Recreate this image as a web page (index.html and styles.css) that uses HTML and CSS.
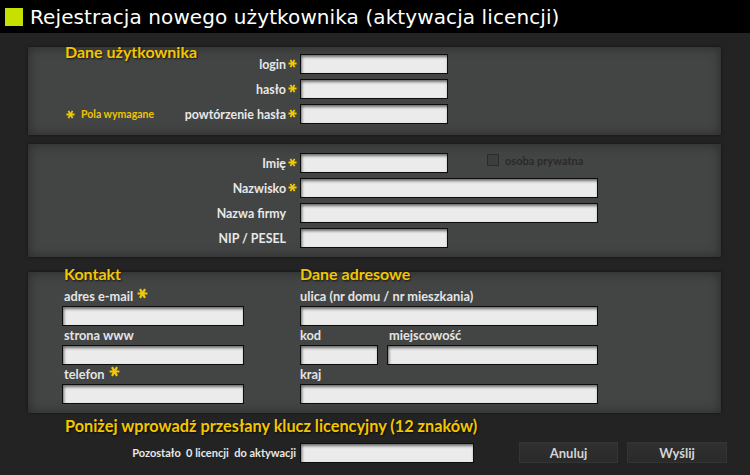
FILE: index.html
```html
<!DOCTYPE html>
<html lang="pl">
<head>
<meta charset="utf-8">
<title>Rejestracja nowego użytkownika</title>
<link rel="stylesheet" href="styles.css">
</head>
<body>
<header class="titlebar">
  <span class="logo"></span>
  <h1 class="title">Rejestracja nowego użytkownika (aktywacja licencji)</h1>
</header>
<main class="content">
  <section class="panel panel-user">
    <div class="side">
      <h2 class="heading">Dane użytkownika</h2>
      <p class="note"><svg class="star" viewBox="0 0 10 10" aria-label="*"><path d="M0.5 5H9.5M2.7 1L7.3 9M7.3 1L2.7 9"/></svg> Pola wymagane</p>
    </div>
    <div class="grid grid-user">
      <label class="lbl">login<svg class="star" viewBox="0 0 10 10" aria-label="*"><path d="M0.5 5H9.5M2.7 1L7.3 9M7.3 1L2.7 9"/></svg></label>
      <input class="field w148" type="text">
      <label class="lbl">hasło<svg class="star" viewBox="0 0 10 10" aria-label="*"><path d="M0.5 5H9.5M2.7 1L7.3 9M7.3 1L2.7 9"/></svg></label>
      <input class="field w148" type="password">
      <label class="lbl">powtórzenie hasła<svg class="star" viewBox="0 0 10 10" aria-label="*"><path d="M0.5 5H9.5M2.7 1L7.3 9M7.3 1L2.7 9"/></svg></label>
      <input class="field w148" type="password">
    </div>
  </section>

  <section class="panel panel-person">
    <div class="grid grid-person">
      <label class="lbl">Imię<svg class="star" viewBox="0 0 10 10" aria-label="*"><path d="M0.5 5H9.5M2.7 1L7.3 9M7.3 1L2.7 9"/></svg></label>
      <div class="cellrow">
        <input class="field w148" type="text">
        <label class="check"><span class="box"></span>osoba prywatna</label>
      </div>
      <label class="lbl">Nazwisko<svg class="star" viewBox="0 0 10 10" aria-label="*"><path d="M0.5 5H9.5M2.7 1L7.3 9M7.3 1L2.7 9"/></svg></label>
      <input class="field w298" type="text">
      <label class="lbl">Nazwa firmy<span class="star blank"></span></label>
      <input class="field w298" type="text">
      <label class="lbl">NIP / PESEL<span class="star blank"></span></label>
      <input class="field w148" type="text">
    </div>
  </section>

  <section class="panel panel-contact">
    <div class="col col-left">
      <h2 class="heading col-heading">Kontakt</h2>
      <div class="fld">
        <label class="flbl">adres e-mail <svg class="star" viewBox="0 0 10 10" aria-label="*"><path d="M0.5 5H9.5M2.7 1L7.3 9M7.3 1L2.7 9"/></svg></label>
        <input class="field w182" type="text">
      </div>
      <div class="fld">
        <label class="flbl">strona www</label>
        <input class="field w182" type="text">
      </div>
      <div class="fld">
        <label class="flbl">telefon <svg class="star" viewBox="0 0 10 10" aria-label="*"><path d="M0.5 5H9.5M2.7 1L7.3 9M7.3 1L2.7 9"/></svg></label>
        <input class="field w182" type="text">
      </div>
    </div>
    <div class="col col-right">
      <h2 class="heading col-heading">Dane adresowe</h2>
      <div class="fld">
        <label class="flbl">ulica (nr domu / nr mieszkania)</label>
        <input class="field w298" type="text">
      </div>
      <div class="fld split">
        <div class="sub">
          <label class="flbl">kod</label>
          <input class="field w78" type="text">
        </div>
        <div class="sub">
          <label class="flbl">miejscowość</label>
          <input class="field w211" type="text">
        </div>
      </div>
      <div class="fld">
        <label class="flbl">kraj</label>
        <input class="field w298" type="text">
      </div>
    </div>
  </section>

  <section class="license">
    <h2 class="heading license-heading">Poniżej wprowadź przesłany klucz licencyjny (12 znaków)</h2>
    <div class="license-row">
      <span class="remain">Pozostało&nbsp; 0 licencji&nbsp; do aktywacji</span>
      <input class="field w174" type="text">
      <button class="btn btn-cancel" type="button">Anuluj</button>
      <button class="btn btn-send" type="button">Wyślij</button>
    </div>
  </section>
</main>
</body>
</html>
```
FILE: styles.css
```css
* { box-sizing: border-box; }

html, body {
  margin: 0;
  padding: 0;
}

body {
  width: 750px;
  height: 475px;
  overflow: hidden;
  background: #232323;
  font-family: "Lato", "Open Sans", sans-serif;
  color: #e4e4e4;
}

.titlebar {
  height: 33px;
  background: #000;
  display: flex;
  align-items: center;
  padding-left: 5px;
}

.logo {
  width: 18px;
  height: 18px;
  background: #c6e000;
  margin-right: 7px;
  flex: none;
}

.title {
  margin: 0;
  font-family: "DejaVu Sans", sans-serif;
  font-weight: normal;
  font-size: 20px;
  color: #fff;
  line-height: 24px;
  letter-spacing: 0.1px;
}

.content {
  padding-top: 14px;
}

.panel {
  margin-left: 28px;
  width: 693px;
  background: #434544;
  box-shadow: inset 0 0 12px rgba(0, 0, 0, 0.4), 0 0 3px rgba(0, 0, 0, 0.5);
}

.heading {
  margin: 0;
  font-weight: 700;
  font-size: 16px;
  line-height: 18px;
  color: #f2c600;
  white-space: nowrap;
  text-shadow: 1px 1px 2px rgba(0, 0, 0, 0.7);
}

.star {
  display: inline-block;
  width: 9px;
  height: 9px;
  margin-left: 2px;
  flex: none;
  fill: none;
  stroke: #f2c800;
  stroke-width: 2;
  position: relative;
  top: -1px;
}

.star.blank { visibility: hidden; }

/* panel 1 */
.panel-user {
  display: flex;
  padding: 7px 0 11px 37px;
}

.side {
  width: 118px;
  display: flex;
  flex-direction: column;
  justify-content: space-between;
}

.side .heading {
  margin-top: -11px;
}

.note {
  margin: 0;
  line-height: 20px;
  font-size: 10.5px;
  font-weight: 700;
  color: #f0c400;
  padding-left: 1px;
  display: flex;
  align-items: center;
  white-space: nowrap;
}

.note .star {
  margin: 0 6px 0 0;
  top: 0;
}

.grid {
  display: grid;
  row-gap: 5px;
  align-items: center;
}

.grid-user {
  grid-template-columns: 117px auto;
}

.grid-person {
  grid-template-columns: 235px auto;
}

.lbl {
  display: flex;
  justify-content: flex-end;
  align-items: center;
  padding-right: 3px;
  font-size: 12.4px;
  font-weight: 700;
  color: #e8e8e8;
  white-space: nowrap;
  height: 20px;
}

.field {
  display: block;
  height: 20px;
  margin: 0;
  padding: 0 4px;
  border: 1px solid #0d0d0d;
  border-radius: 0;
  background: #ebebeb;
  box-shadow: inset 1px 2px 3px rgba(0, 0, 0, 0.55);
  font: 12px "Lato", sans-serif;
  outline: none;
}

.w78 { width: 78px; }
.w148 { width: 148px; }
.w174 { width: 174px; }
.w182 { width: 182px; }
.w211 { width: 211px; }
.w298 { width: 298px; }

/* panel 2 */
.panel-person {
  margin-top: 9px;
  padding: 9px 0 9px 37px;
}

.cellrow {
  display: flex;
  align-items: center;
}

.check {
  display: flex;
  align-items: center;
  margin-left: 39px;
  margin-top: -6px;
  font-size: 11px;
  font-weight: 700;
  color: #2a2a2a;
}

.box {
  width: 12px;
  height: 12px;
  background: #3c3d3d;
  border: 1px solid #2c2c2c;
  margin-right: 6px;
}

/* panel 3 */
.panel-contact {
  margin-top: 15px;
  display: flex;
  column-gap: 56px;
  padding: 0 0 9px 34px;
}

.col-left { width: 182px; }
.col-right { width: 298px; }

.col-heading {
  margin-top: -7px;
  margin-bottom: 6px;
}

.col-left .col-heading,
.col-left .flbl {
  padding-left: 2px;
}

.fld + .fld {
  margin-top: 2px;
}

.flbl {
  display: block;
  font-size: 12.8px;
  font-weight: 700;
  line-height: 15px;
  margin-bottom: 2px;
  color: #e4e4e4;
  white-space: nowrap;
}

.flbl .star {
  margin-left: 1px;
  width: 11px;
  height: 11px;
  top: -2px;
}

.split {
  display: flex;
  column-gap: 9px;
}

.split .sub + .sub .flbl {
  padding-left: 2px;
}

/* license */
.license {
  padding-left: 65px;
  margin-top: 3px;
}

.license-heading {
  font-size: 16.3px;
  line-height: 20px;
}

.license-row {
  display: flex;
  align-items: center;
  margin-top: 6px;
}

.remain {
  width: 235px;
  text-align: right;
  padding-right: 4px;
  font-size: 11px;
  font-weight: 700;
  color: #e8e8e8;
  white-space: nowrap;
}

.btn {
  height: 21px;
  padding: 0;
  border: 1px solid #343434;
  background: linear-gradient(#303030, #2a2a2a);
  color: #d4d4d4;
  font-family: "Lato", sans-serif;
  font-size: 13px;
  font-weight: 700;
}

.btn-cancel {
  width: 99px;
  margin-left: 45px;
}

.btn-send {
  width: 100px;
  margin-left: 9px;
}
```
